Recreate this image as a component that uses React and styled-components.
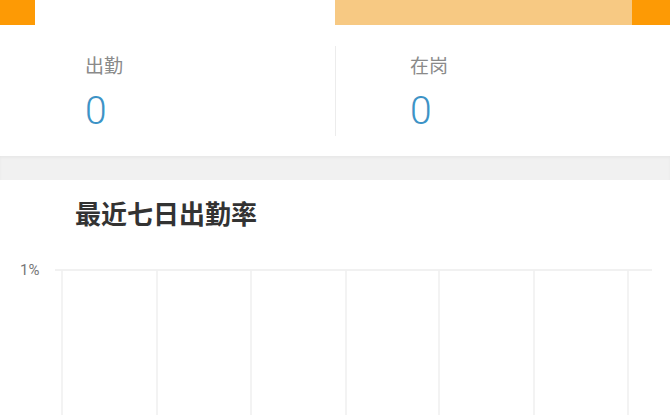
import React from "react";
import styled, { createGlobalStyle } from "styled-components";

const Global = createGlobalStyle`
    body {
        margin: 0;
        background: #fff;
        font-family: "Noto Sans CJK SC", "Noto Sans", sans-serif;
    }
`;

const Page = styled.div`
    width: 670px;
    height: 415px;
    overflow: hidden;
    display: flex;
    flex-direction: column;
`;

const TopBar = styled.div`
    flex-shrink: 0;
    height: 25px;
    display: flex;
`;

const Tab = styled.div`
    flex: ${p => p.grow || 0} 0 ${p => p.w || "auto"};
    background: ${p => p.bg};
`;

const Stats = styled.section`
    flex-shrink: 0;
    height: 131px;
    display: flex;
    align-items: center;
`;

const Stat = styled.div`
    width: 50%;
    height: 90px;
    box-sizing: border-box;
    padding: 7px 0 0 ${p => p.pl}px;
    border-left: ${p => p.divider ? "1px solid #ececec" : "none"};
    display: flex;
    flex-direction: column;
`;

const Label = styled.span`
    font-size: 19px;
    color: #8a8a8a;
    line-height: 24px;
`;

const Value = styled.span`
    font-family: Roboto, "Noto Sans", sans-serif;
    font-weight: 300;
    font-size: 39px;
    color: #3d93c6;
    line-height: 44px;
    margin-top: 12px;
`;

const Band = styled.div`
    flex-shrink: 0;
    height: 24px;
    background: #f1f1f1;
    box-shadow: inset 0 2px 3px rgba(0, 0, 0, 0.04);
`;

const Card = styled.section`
    flex: 1;
    min-height: 0;
    display: flex;
    flex-direction: column;
`;

const Title = styled.h2`
    margin: 0;
    padding: 17px 0 0 75px;
    font-size: 26px;
    font-weight: 700;
    color: #333;
    line-height: 32px;
`;

const Chart = styled.svg`
    display: block;
    flex-shrink: 0;
    margin-top: 10px;
`;

const xs = [62, 157, 251, 346, 439, 534, 628];

function RateChart() {
    return (
        <Chart width="670" height="180" viewBox="0 0 670 180">
            <text x="20" y="36" fontSize="15" fill="#777" fontFamily="Roboto, sans-serif">1%</text>
            <line x1="55" y1="31" x2="652" y2="31" stroke="#ececec" strokeWidth="1.5" />
            {xs.map(x => (
                <line key={x} x1={x} y1="31" x2={x} y2="180" stroke="#efefef" strokeWidth="1.5" />
            ))}
        </Chart>
    );
}

export default function App() {
    return (
        <Page>
            <Global />
            <TopBar>
                <Tab w="35px" bg="#fd9a05" />
                <Tab grow={1} bg="#fff" />
                <Tab w="297px" bg="#f7c983" />
                <Tab w="38px" bg="#fd9a05" />
            </TopBar>
            <Stats>
                <Stat pl={85}>
                    <Label>出勤</Label>
                    <Value>0</Value>
                </Stat>
                <Stat pl={74} divider>
                    <Label>在岗</Label>
                    <Value>0</Value>
                </Stat>
            </Stats>
            <Band />
            <Card>
                <Title>最近七日出勤率</Title>
                <RateChart />
            </Card>
        </Page>
    );
}
